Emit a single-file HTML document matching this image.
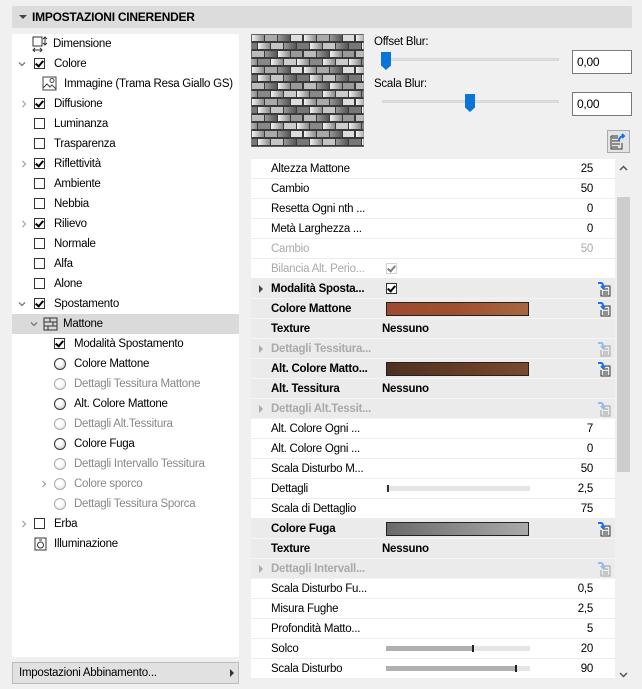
<!DOCTYPE html><html><head><meta charset="utf-8"><style>
*{box-sizing:border-box;margin:0;padding:0}
body{width:642px;height:689px;background:#f0f0f0;font-family:"Liberation Sans",sans-serif;font-size:11.5px;letter-spacing:-0.25px;color:#000;position:relative;overflow:hidden}
.abs{position:absolute}
.hdr{left:12px;top:6px;width:620px;height:22px;background:#dcdcdc;border-radius:2px;font-weight:bold;font-size:12px;line-height:22px;padding-left:20px}
.hdr:before{content:"";position:absolute;left:7px;top:9px;border-left:4px solid transparent;border-right:4px solid transparent;border-top:4px solid #444}
.left{left:12px;top:34px;width:227px;height:623px;background:#fff}
.tr{position:absolute;height:20px;line-height:21px;white-space:nowrap}
.cb{position:absolute;width:11px;height:11px;border:1px solid #333;background:#fff;top:4px}
.cb.on:after{content:"";position:absolute;left:2px;top:0px;width:3px;height:6px;border:solid #000;border-width:0 2px 2px 0;transform:rotate(40deg)}
.arr{position:absolute;top:6px;width:8px;height:8px}
.rad{position:absolute;width:12px;height:12px;border-radius:50%;border:1px solid #333;background:radial-gradient(circle at 40% 35%,#fff 30%,#bbb 100%);top:4px}
.rad.g{border-color:#aaa;background:radial-gradient(circle at 40% 35%,#fff 30%,#ddd 100%)}
.grey{color:#888}
.row{position:absolute;left:251px;width:364px;height:20px;line-height:21px;background:#fff;border-bottom:1px solid #ececec}
.row.b{background:#ebebeb;font-weight:bold;border-bottom:1px solid #f5f5f5}
.row .l{position:absolute;left:20px}
.row .v{position:absolute;right:22px}
.row .n{position:absolute;left:131px}
.sw{position:absolute;left:135px;top:3px;width:143px;height:14px;border:1px solid #222}
.sl{position:absolute;left:135px;top:7px;width:144px;height:5px;background:#e5e5e5}
.ico{position:absolute;left:345px;top:2px}
.tri{position:absolute;left:8px;top:6px;border-top:4px solid transparent;border-bottom:4px solid transparent;border-left:4px solid #444}
.inp{position:absolute;width:60px;height:24px;border:1px solid #7a7a7a;background:#fff;line-height:22px;padding-left:4px;font-size:12px}
.track{position:absolute;height:3px;background:#e2e2e2;border:1px solid #d6d6d6}
.thumb{position:absolute;width:10px;height:18px;background:#0a74d8;clip-path:polygon(0 0,100% 0,100% 75%,50% 100%,0 75%)}
</style></head><body>
<svg width="0" height="0" style="position:absolute"><defs>
<symbol id="dn" viewBox="0 0 8 8"><path d="M1 2.5l3 3 3-3" stroke="#777" stroke-width="1.3" fill="none"/></symbol>
<symbol id="rt" viewBox="0 0 8 8"><path d="M2.5 1l3 3-3 3" stroke="#aaa" stroke-width="1.3" fill="none"/></symbol>
<symbol id="ic" viewBox="0 0 16 16"><path d="M6 5h8v10H5V9M7 8h5M7 11h5M7 13h5" stroke="#333" fill="none"/><path d="M2 2h3c2 0 2 2 2 4M5 5l2 2 2-2" stroke="#1a73e8" stroke-width="2" fill="none"/></symbol>
</defs></svg>
<div class="abs hdr">IMPOSTAZIONI CINERENDER</div>
<div class="abs left">
<div class="tr" style="top:0;left:20px"><svg width="16" height="16" style="position:absolute;left:0;top:2px"><rect x="1" y="1" width="9" height="9" fill="none" stroke="#333"/><path d="M13 1v8M11 3l2-2 2 2M11 7l2 2 2-2M1 14h9M3 12l-2 2 2 2M8 12l2 2-2 2" stroke="#333" fill="none"/></svg><span style="margin-left:21px">Dimensione</span></div>
<div class="tr" style="top:20px;left:6px"><svg class="arr" style="left:0"><use href="#dn"/></svg><span class="cb on" style="left:16px"></span><span style="margin-left:36px">Colore</span></div>
<div class="tr" style="top:40px;left:30px"><svg width="16" height="16" style="position:absolute;left:0;top:2px"><rect x="1" y="1" width="13" height="13" fill="none" stroke="#444"/><path d="M1 12l4-4 3 3 2-2 4 4" stroke="#444" fill="none"/><circle cx="10" cy="4.5" r="2" fill="none" stroke="#444"/></svg><span style="margin-left:22px">Immagine (Trama Resa Giallo GS)</span></div>
<div class="tr" style="top:60px;left:8px"><svg class="arr" style="left:0"><use href="#rt"/></svg><span class="cb on" style="left:14px"></span><span style="margin-left:34px">Diffusione</span></div>
<div class="tr" style="top:80px;left:22px"><span class="cb" style="left:0"></span><span style="margin-left:20px">Luminanza</span></div>
<div class="tr" style="top:100px;left:22px"><span class="cb" style="left:0"></span><span style="margin-left:20px">Trasparenza</span></div>
<div class="tr" style="top:120px;left:8px"><svg class="arr" style="left:0"><use href="#rt"/></svg><span class="cb on" style="left:14px"></span><span style="margin-left:34px">Riflettività</span></div>
<div class="tr" style="top:140px;left:22px"><span class="cb" style="left:0"></span><span style="margin-left:20px">Ambiente</span></div>
<div class="tr" style="top:160px;left:22px"><span class="cb" style="left:0"></span><span style="margin-left:20px">Nebbia</span></div>
<div class="tr" style="top:180px;left:8px"><svg class="arr" style="left:0"><use href="#rt"/></svg><span class="cb on" style="left:14px"></span><span style="margin-left:34px">Rilievo</span></div>
<div class="tr" style="top:200px;left:22px"><span class="cb" style="left:0"></span><span style="margin-left:20px">Normale</span></div>
<div class="tr" style="top:220px;left:22px"><span class="cb" style="left:0"></span><span style="margin-left:20px">Alfa</span></div>
<div class="tr" style="top:240px;left:22px"><span class="cb" style="left:0"></span><span style="margin-left:20px">Alone</span></div>
<div class="tr" style="top:260px;left:6px"><svg class="arr" style="left:0"><use href="#dn"/></svg><span class="cb on" style="left:16px"></span><span style="margin-left:36px">Spostamento</span></div>
<div class="tr" style="top:280px;left:0;width:227px;background:#dadada"><svg class="arr" style="left:18px"><use href="#dn"/></svg><svg width="16" height="14" style="position:absolute;left:31px;top:3px"><rect x="1" y="1" width="13" height="12" fill="none" stroke="#333"/><path d="M1 5h13M1 9h13M7 1v4M10 5v4M5 9v4" stroke="#333"/></svg><span style="margin-left:51px">Mattone</span></div>
<div class="tr" style="top:300px;left:42px"><span class="cb on" style="left:0"></span><span style="margin-left:20px">Modalità Spostamento</span></div>
<div class="tr" style="top:320px;left:42px"><span class="rad" style="left:0"></span><span style="margin-left:20px">Colore Mattone</span></div>
<div class="tr grey" style="top:340px;left:42px"><span class="rad g" style="left:0"></span><span style="margin-left:20px">Dettagli Tessitura Mattone</span></div>
<div class="tr" style="top:360px;left:42px"><span class="rad" style="left:0"></span><span style="margin-left:20px">Alt. Colore Mattone</span></div>
<div class="tr grey" style="top:380px;left:42px"><span class="rad g" style="left:0"></span><span style="margin-left:20px">Dettagli Alt.Tessitura</span></div>
<div class="tr" style="top:400px;left:42px"><span class="rad" style="left:0"></span><span style="margin-left:20px">Colore Fuga</span></div>
<div class="tr grey" style="top:420px;left:42px"><span class="rad g" style="left:0"></span><span style="margin-left:20px">Dettagli Intervallo Tessitura</span></div>
<div class="tr grey" style="top:440px;left:28px"><svg class="arr" style="left:0"><use href="#rt"/></svg><span class="rad g" style="left:14px"></span><span style="margin-left:34px">Colore sporco</span></div>
<div class="tr grey" style="top:460px;left:42px"><span class="rad g" style="left:0"></span><span style="margin-left:20px">Dettagli Tessitura Sporca</span></div>
<div class="tr" style="top:480px;left:8px"><svg class="arr" style="left:0"><use href="#rt"/></svg><span class="cb" style="left:14px"></span><span style="margin-left:34px">Erba</span></div>
<div class="tr" style="top:500px;left:22px"><svg width="13" height="14" style="position:absolute;left:0;top:3px"><rect x="1" y="1" width="11" height="12" fill="none" stroke="#333"/><circle cx="6.5" cy="8" r="3" fill="none" stroke="#333"/><path d="M5 3h3" stroke="#333"/></svg><span style="margin-left:20px">Illuminazione</span></div>
</div>
<div class="abs" style="left:12px;top:662px;width:227px;height:22px;background:#e1e1e1;border:1px solid #bbb;line-height:21px;padding-left:6px">Impostazioni Abbinamento...<span style="position:absolute;right:4px;top:6px;border-top:4px solid transparent;border-bottom:4px solid transparent;border-left:4px solid #333"></span></div>

<svg class="abs" style="left:251px;top:34px" width="113" height="113"><defs>
<linearGradient id="b" x1="0" x2="1"><stop offset="0" stop-color="#f2f2f2"/><stop offset="1" stop-color="#8a8a8a"/></linearGradient>
<linearGradient id="c" x1="0" x2="1"><stop offset="0" stop-color="#999"/><stop offset="1" stop-color="#555"/></linearGradient>
<pattern id="p" width="52" height="32" patternUnits="userSpaceOnUse"><rect width="52" height="32" fill="#3a3a3a"/>
<rect x="1" y="1" width="12" height="6" fill="url(#b)"/><rect x="14" y="1" width="12" height="6" fill="#aaa"/><rect x="27" y="1" width="12" height="6" fill="url(#c)"/><rect x="40" y="1" width="11" height="6" fill="#ddd"/>
<rect x="-6" y="9" width="12" height="6" fill="#777"/><rect x="7" y="9" width="12" height="6" fill="url(#b)"/><rect x="20" y="9" width="12" height="6" fill="#c4c4c4"/><rect x="33" y="9" width="12" height="6" fill="url(#c)"/><rect x="46" y="9" width="12" height="6" fill="#777"/>
<rect x="1" y="17" width="12" height="6" fill="#bbb"/><rect x="14" y="17" width="12" height="6" fill="url(#c)"/><rect x="27" y="17" width="12" height="6" fill="url(#b)"/><rect x="40" y="17" width="11" height="6" fill="#999"/>
<rect x="-6" y="25" width="12" height="6" fill="url(#b)"/><rect x="7" y="25" width="12" height="6" fill="#888"/><rect x="20" y="25" width="12" height="6" fill="url(#b)"/><rect x="33" y="25" width="12" height="6" fill="#ccc"/><rect x="46" y="25" width="12" height="6" fill="url(#b)"/>
</pattern></defs><rect width="113" height="113" fill="url(#p)" stroke="#888"/></svg>
<div class="abs" style="left:374px;top:36px">Offset Blur:</div>
<div class="track" style="left:382px;top:58px;width:177px"></div>
<div class="thumb" style="left:381px;top:52px"></div>
<div class="inp" style="left:572px;top:50px">0,00</div>
<div class="abs" style="left:374px;top:78px">Scala Blur:</div>
<div class="track" style="left:382px;top:100px;width:177px"></div>
<div class="thumb" style="left:465px;top:94px"></div>
<div class="inp" style="left:572px;top:92px">0,00</div>
<div class="abs" style="left:607px;top:130px;width:23px;height:23px;border:1px solid #aaa;background:#e4e4e4"><svg width="21" height="21"><path d="M4 7h6M4 10h8M4 13h8M4 16h6" stroke="#333"/><path d="M3 5h7M3 5v13h11v-6" stroke="#333" fill="none"/><path d="M11 10c0-3 2-5 5-5M14 3l2 2-2 2" stroke="#1a73e8" stroke-width="2" fill="none"/></svg></div>

<div class="abs" style="left:617px;top:159px;width:13px;height:521px;background:#f0f0f0"></div>
<div class="abs" style="left:617px;top:197px;width:13px;height:275px;background:#cdcdcd"></div>
<svg class="abs" style="left:619px;top:165px" width="9" height="6"><path d="M1 5l3.5-3.5L8 5" stroke="#555" stroke-width="1.5" fill="none"/></svg>
<svg class="abs" style="left:619px;top:672px" width="9" height="6"><path d="M1 1l3.5 3.5L8 1" stroke="#555" stroke-width="1.5" fill="none"/></svg>

<div class="row" style="top:159px"><span class="l">Altezza Mattone</span><span class="v">25</span></div>
<div class="row" style="top:179px"><span class="l">Cambio</span><span class="v">50</span></div>
<div class="row" style="top:199px"><span class="l">Resetta Ogni nth ...</span><span class="v">0</span></div>
<div class="row" style="top:219px"><span class="l">Metà Larghezza ...</span><span class="v">0</span></div>
<div class="row grey" style="top:239px;color:#aaa"><span class="l">Cambio</span><span class="v">50</span></div>
<div class="row" style="top:259px;color:#aaa"><span class="l">Bilancia Alt. Perio...</span><span class="cb on" style="left:135px;border-color:#aaa;opacity:.5"></span></div>
<div class="row b" style="top:279px"><span class="tri"></span><span class="l">Modalità Sposta...</span><span class="cb on" style="left:135px"></span><svg class="ico" width="16" height="16"><use href="#ic"/></svg></div>
<div class="row b" style="top:299px"><span class="l">Colore Mattone</span><span class="sw" style="background:linear-gradient(90deg,#9e4a30,#a0502e 50%,#a8683e)"></span><svg class="ico" width="16" height="16"><use href="#ic"/></svg></div>
<div class="row b" style="top:319px"><span class="l">Texture</span><span class="n">Nessuno</span></div>
<div class="row b" style="top:339px;color:#aaa"><span class="tri" style="border-left-color:#aaa"></span><span class="l">Dettagli Tessitura...</span><svg class="ico" width="16" height="16" opacity=".4"><use href="#ic"/></svg></div>
<div class="row b" style="top:359px"><span class="l">Alt. Colore Matto...</span><span class="sw" style="background:linear-gradient(90deg,#4e3020,#6a3e26 60%,#7a4a2e)"></span><svg class="ico" width="16" height="16"><use href="#ic"/></svg></div>
<div class="row b" style="top:379px"><span class="l">Alt. Tessitura</span><span class="n">Nessuno</span></div>
<div class="row b" style="top:399px;color:#aaa"><span class="tri" style="border-left-color:#aaa"></span><span class="l">Dettagli Alt.Tessit...</span><svg class="ico" width="16" height="16" opacity=".4"><use href="#ic"/></svg></div>
<div class="row" style="top:419px"><span class="l">Alt. Colore Ogni ...</span><span class="v">7</span></div>
<div class="row" style="top:439px"><span class="l">Alt. Colore Ogni ...</span><span class="v">0</span></div>
<div class="row" style="top:459px"><span class="l">Scala Disturbo M...</span><span class="v">50</span></div>
<div class="row" style="top:479px"><span class="l">Dettagli</span><span class="sl"><span style="position:absolute;left:1px;top:-1px;width:2px;height:7px;background:#333"></span></span><span class="v">2,5</span></div>
<div class="row" style="top:499px"><span class="l">Scala di Dettaglio</span><span class="v">75</span></div>
<div class="row b" style="top:519px"><span class="l">Colore Fuga</span><span class="sw" style="background:linear-gradient(90deg,#6a6a6a,#8a8a8a 50%,#aaa)"></span><svg class="ico" width="16" height="16"><use href="#ic"/></svg></div>
<div class="row b" style="top:539px"><span class="l">Texture</span><span class="n">Nessuno</span></div>
<div class="row b" style="top:559px;color:#aaa"><span class="tri" style="border-left-color:#aaa"></span><span class="l">Dettagli Intervall...</span><svg class="ico" width="16" height="16" opacity=".4"><use href="#ic"/></svg></div>
<div class="row" style="top:579px"><span class="l">Scala Disturbo Fu...</span><span class="v">0,5</span></div>
<div class="row" style="top:599px"><span class="l">Misura Fughe</span><span class="v">2,5</span></div>
<div class="row" style="top:619px"><span class="l">Profondità Matto...</span><span class="v">5</span></div>
<div class="row" style="top:639px"><span class="l">Solco</span><span class="sl"><span style="position:absolute;left:0;top:0;width:87px;height:5px;background:#b0b0b0"></span><span style="position:absolute;left:86px;top:-1px;width:2px;height:7px;background:#222"></span></span><span class="v">20</span></div>
<div class="row" style="top:659px"><span class="l">Scala Disturbo</span><span class="sl"><span style="position:absolute;left:0;top:0;width:130px;height:5px;background:#b0b0b0"></span><span style="position:absolute;left:129px;top:-1px;width:2px;height:7px;background:#222"></span></span><span class="v">90</span></div>
</body></html>
